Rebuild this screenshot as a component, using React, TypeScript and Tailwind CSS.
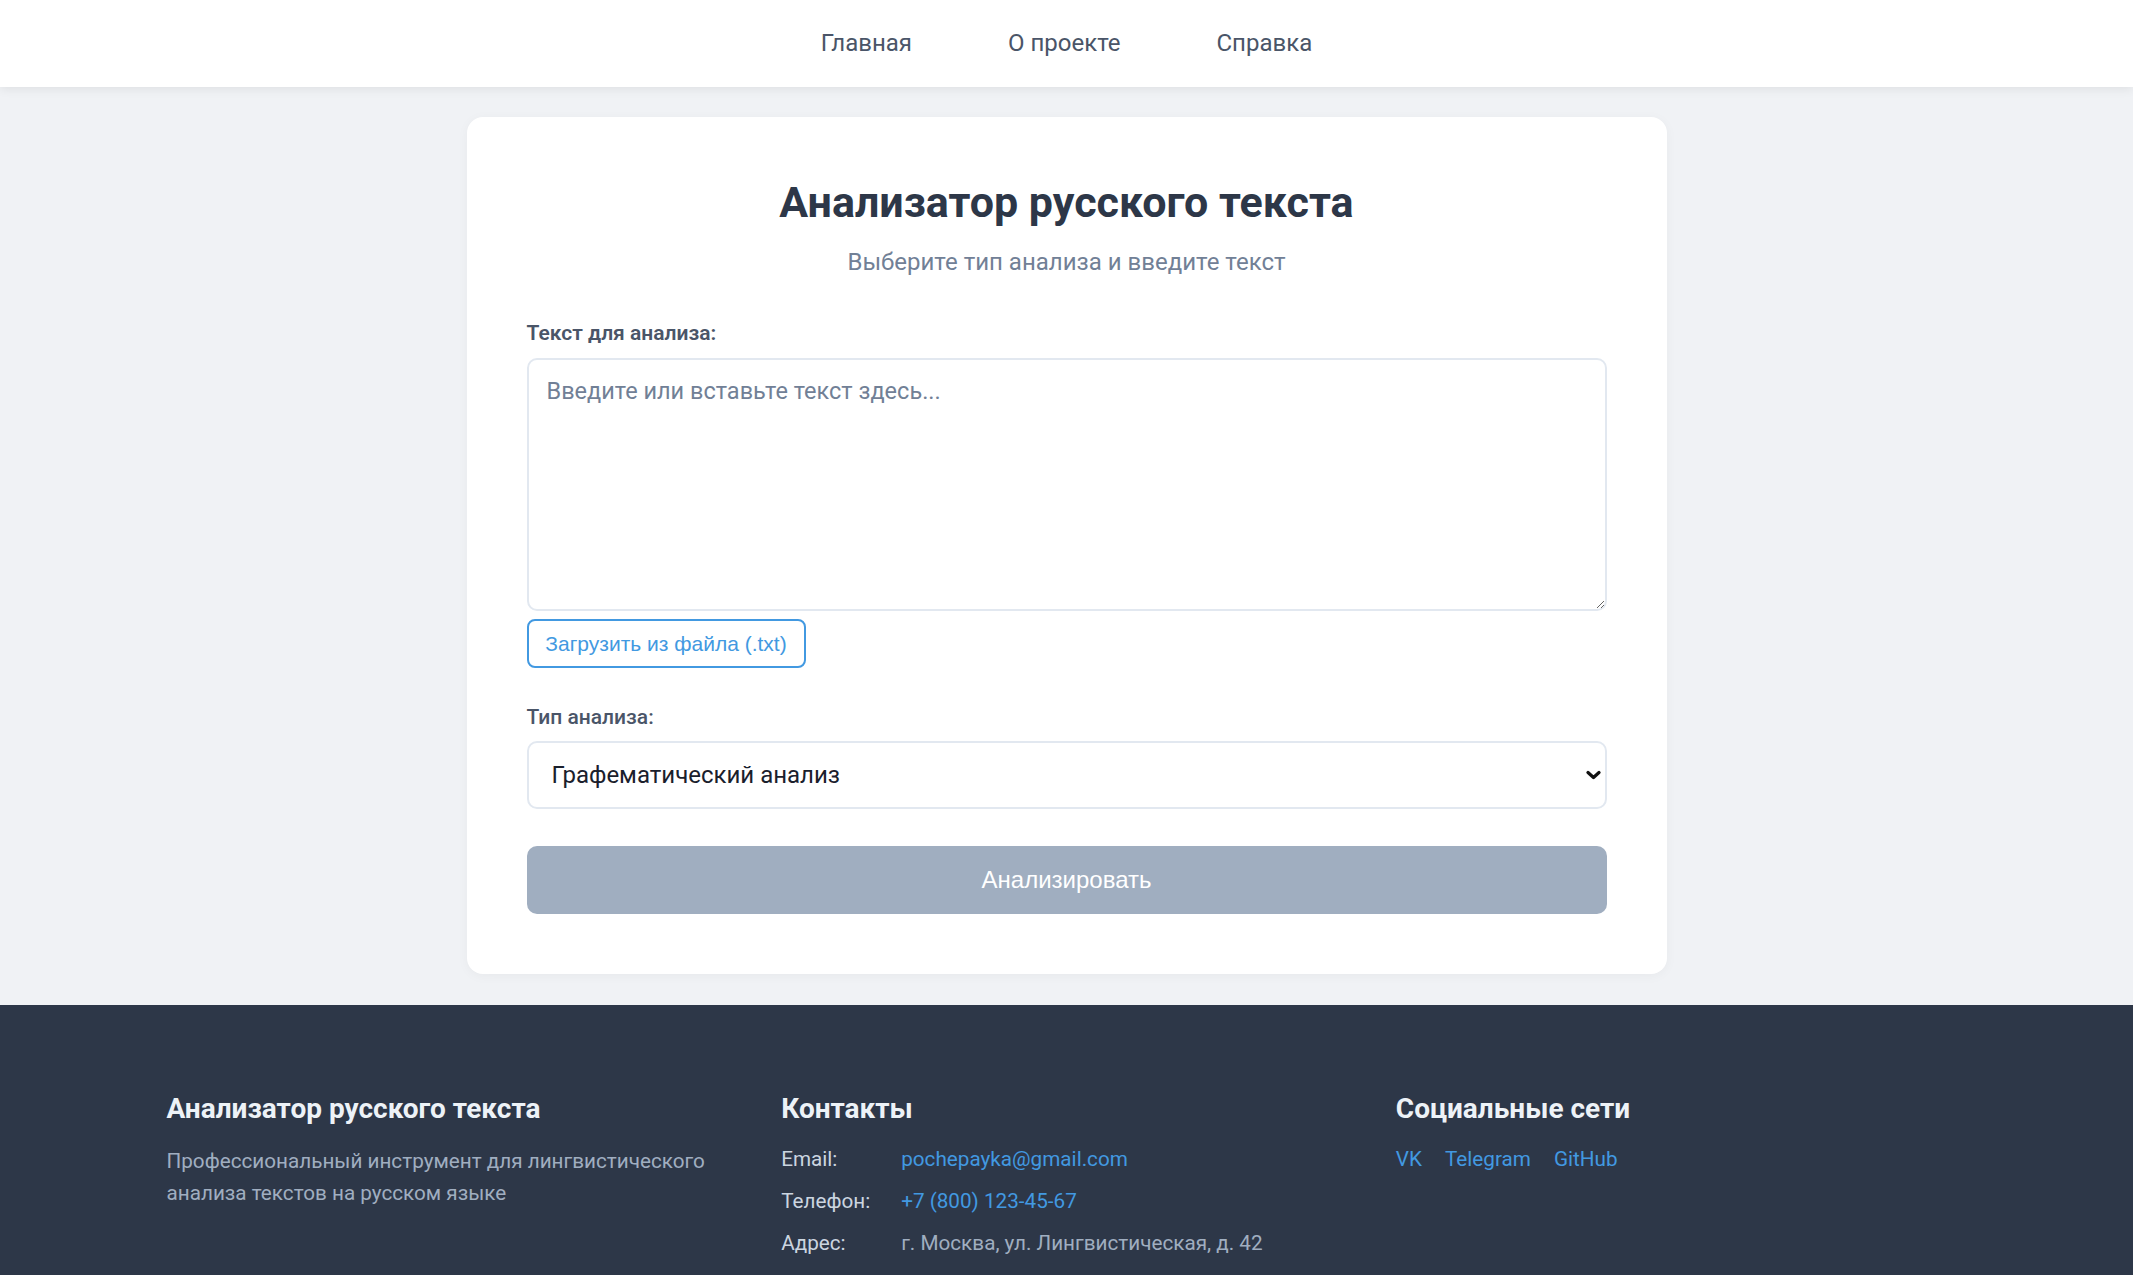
import React from "react";

export default function App() {
  return (
    <div className="min-h-screen bg-[#f0f2f5] font-['Roboto','Noto_Sans',sans-serif] flex flex-col">
      <nav className="h-[87px] bg-white shadow-[0_2px_10px_rgba(0,0,0,0.08)] flex items-center justify-center gap-[96px] pb-[2px] relative z-10">
        <a className="text-[24px] text-[#4a5568]">Главная</a>
        <a className="text-[24px] text-[#4a5568]">О проекте</a>
        <a className="text-[24px] text-[#4a5568]">Справка</a>
      </nav>

      <main className="flex justify-center pt-[30px] pb-[31px]">
        <div className="w-[1200px] bg-white rounded-[16px] shadow-[0_2px_12px_rgba(0,0,0,0.04)] p-[60px] flex flex-col">
          <h1 className="text-[43px] leading-[50px] font-bold text-[#2d3748] text-center">Анализатор русского текста</h1>
          <p className="mt-[19px] text-[24px] leading-[32px] text-[#718096] text-center">Выберите тип анализа и введите текст</p>

          <label className="mt-[41px] text-[21px] leading-[28px] font-semibold text-[#4a5568]">Текст для анализа:</label>
          <textarea
            className="mt-[11px] h-[253px] w-full border-2 border-[#e2e8f0] rounded-[10px] px-[18px] py-[16px] text-[23.5px] leading-[30px] text-[#2d3748] placeholder:text-[#718096] resize-y outline-none"
            placeholder="Введите или вставьте текст здесь..."
          />
          <div className="mt-[8px]">
            <button className="h-[49px] w-[279px] border-2 border-[#4299e1] rounded-[8px] text-[21px] text-[#4299e1] font-['Liberation_Sans',Arial,sans-serif] bg-white">
              Загрузить из файла (.txt)
            </button>
          </div>

          <label className="mt-[35px] text-[21px] leading-[28px] font-medium text-[#4a5568]">Тип анализа:</label>
          <div className="relative mt-[10px]">
            <select className="appearance-none h-[68px] w-full border-2 border-[#e2e8f0] rounded-[10px] pl-[23px] pr-[40px] text-[24px] text-[#1a202c] bg-white outline-none">
              <option>Графематический анализ</option>
              <option>Морфологический анализ</option>
              <option>Синтаксический анализ</option>
            </select>
            <svg
              className="absolute right-[6px] top-1/2 -translate-y-1/2 pointer-events-none"
              width="15"
              height="10"
              viewBox="0 0 15 10"
            >
              <path d="M2 2.5 L7.5 7.5 L13 2.5" fill="none" stroke="#111" strokeWidth="3.2" strokeLinecap="round" strokeLinejoin="round" />
            </svg>
          </div>

          <button className="mt-[37px] h-[68px] w-full bg-[#a0aec0] rounded-[10px] text-[24px] text-white font-['Liberation_Sans',Arial,sans-serif]">
            Анализировать
          </button>
        </div>
      </main>

      <footer className="bg-[#2d3748] pt-[86px] pb-[60px] flex justify-center">
        <div className="w-[1800px] grid grid-cols-3 gap-[44px]">
          <div>
            <h3 className="text-[28px] leading-[36px] font-bold text-[#edf2f7]">Анализатор русского текста</h3>
            <p className="mt-[18px] text-[20.7px] leading-[32px] text-[#a0aec0] w-[560px]">
              Профессиональный инструмент для лингвистического анализа текстов на русском языке
            </p>
          </div>
          <div>
            <h3 className="text-[28px] leading-[36px] font-bold text-[#edf2f7]">Контакты</h3>
            <div className="mt-[16px] flex flex-col gap-[10px] text-[20.7px] leading-[32px]">
              <div className="flex">
                <span className="w-[120px] text-[#cbd5e0]">Email:</span>
                <span className="text-[#4299e1]">pochepayka@gmail.com</span>
              </div>
              <div className="flex">
                <span className="w-[120px] text-[#cbd5e0]">Телефон:</span>
                <span className="text-[#4299e1]">+7 (800) 123-45-67</span>
              </div>
              <div className="flex">
                <span className="w-[120px] text-[#cbd5e0]">Адрес:</span>
                <span className="text-[#a0aec0]">г. Москва, ул. Лингвистическая, д. 42</span>
              </div>
            </div>
          </div>
          <div>
            <h3 className="text-[28px] leading-[36px] font-bold text-[#edf2f7]">Социальные сети</h3>
            <div className="mt-[16px] flex gap-[23px] text-[20.7px] leading-[32px] text-[#4299e1]">
              <a>VK</a>
              <a>Telegram</a>
              <a>GitHub</a>
            </div>
          </div>
        </div>
      </footer>
    </div>
  );
}
